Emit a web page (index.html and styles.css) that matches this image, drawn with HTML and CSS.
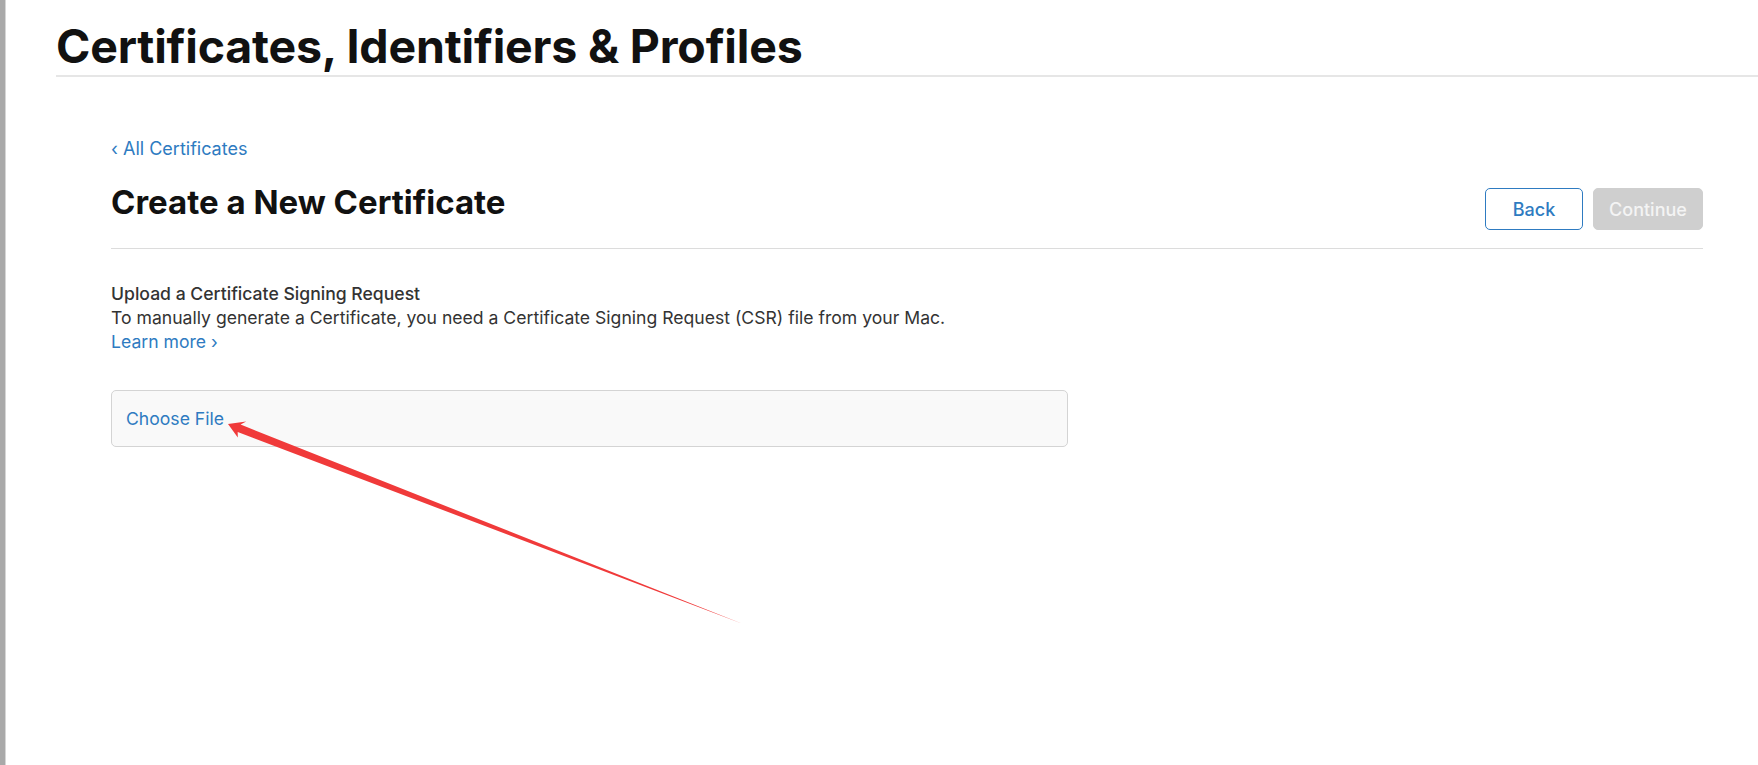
FILE: index.html
```html
<!DOCTYPE html>
<html>
	<head>
		<meta charset="utf-8">
		<title>Certificates, Identifiers &amp; Profiles</title>
		<link rel="stylesheet" href="styles.css">
	</head>

	<body>
		<div class="frame">
			<div class="page">
				<header class="top">
					<h1>Certificates, Identifiers &amp; Profiles</h1>
				</header>

				<main class="content">
					<a class="crumb" href="#">‹ All Certificates</a>

					<section class="head">
						<h2>Create a New Certificate</h2>
						<div class="actions">
							<button class="btn btn-back">Back</button>
							<button class="btn btn-continue" disabled>Continue</button>
						</div>
					</section>

					<section class="upload">
						<h3>Upload a Certificate Signing Request</h3>
						<p>To manually generate a Certificate, you need a Certificate Signing Request (CSR) file from your Mac.</p>
						<a class="more" href="#">Learn more ›</a>

						<label class="drop">
							<span>Choose File</span>
						</label>
					</section>
				</main>
			</div>

			<!-- annotation drawn over the screenshot -->
			<svg class="arrow" width="1758" height="765" viewBox="0 0 1758 765">
				<polygon fill="#f03a3a" points="228,424 246.2,421.4 240.6,424.6 743,624 237.7,432.1 237.8,437.5"/>
			</svg>
		</div>
	</body>
</html>
```

FILE: styles.css
```css
:root {
	box-sizing: border-box;
}

*, *::before, *::after {
	box-sizing: inherit;
}

body {
	margin: 0;
	background: #fff;
	font-family: "Inter", "Liberation Sans", sans-serif;
	color: #1d1d1f;
}

.frame {
	position: relative;
	min-height: 765px;
	border-left: 5px solid #a9a9a9;
}

.page {
	min-height: 765px;
	border-left: 1px solid #d6d6d6;
}

.top {
	margin-left: 50px;
	padding-top: 17px;
	border-bottom: 2px solid #e6e6e6;

	& > h1 {
		margin: 0;
		font-size: 46.5px;
		font-weight: 700;
		line-height: 58px;
		letter-spacing: -0.2px;
		color: #111;
	}
}

.content {
	padding: 60px 55px 0 105px;
}

.crumb {
	display: inline-block;
	font-size: 18px;
	line-height: 24px;
	color: #2e7bc1;
	text-decoration: none;
}

.head {
	display: flex;
	justify-content: space-between;
	align-items: flex-start;
	margin-top: 27px;
	padding-bottom: 18px;
	border-bottom: 1px solid #dcdcdc;

	& > h2 {
		margin: -1px 0 0;
		font-size: 33px;
		font-weight: 700;
		line-height: 30px;
		color: #111;
	}
}

.actions {
	display: flex;
	gap: 10px;
}

.btn {
	height: 42px;
	padding: 0;
	border-radius: 5px;
	font-family: inherit;
	font-size: 18px;
	font-weight: 500;
}

.btn-back {
	width: 98px;
	border: 1px solid #2e7bc1;
	background: #fff;
	color: #2e7bc1;
}

.btn-continue {
	width: 110px;
	border: 1px solid #cfcfcf;
	background: #cfcfcf;
	color: #f4f4f4;
}

.upload {
	padding-top: 33px;
	font-size: 17.6px;
	line-height: 24px;
	color: #333;

	& > h3 {
		margin: 0;
		font-size: 17.6px;
		font-weight: 500;
		line-height: 24px;
	}

	& > p {
		margin: 0;
	}
}

.more {
	color: #2e7bc1;
	text-decoration: none;
}

.drop {
	display: flex;
	align-items: center;
	width: 957px;
	height: 57px;
	margin-top: 36px;
	padding-left: 14px;
	border: 1px solid #d4d4d4;
	border-radius: 5px;
	background: #f9f9f9;
	color: #2e7bc1;
	font-size: 17.6px;
}

.arrow {
	position: absolute;
	top: 0;
	left: -5px;
	pointer-events: none;
}
```
